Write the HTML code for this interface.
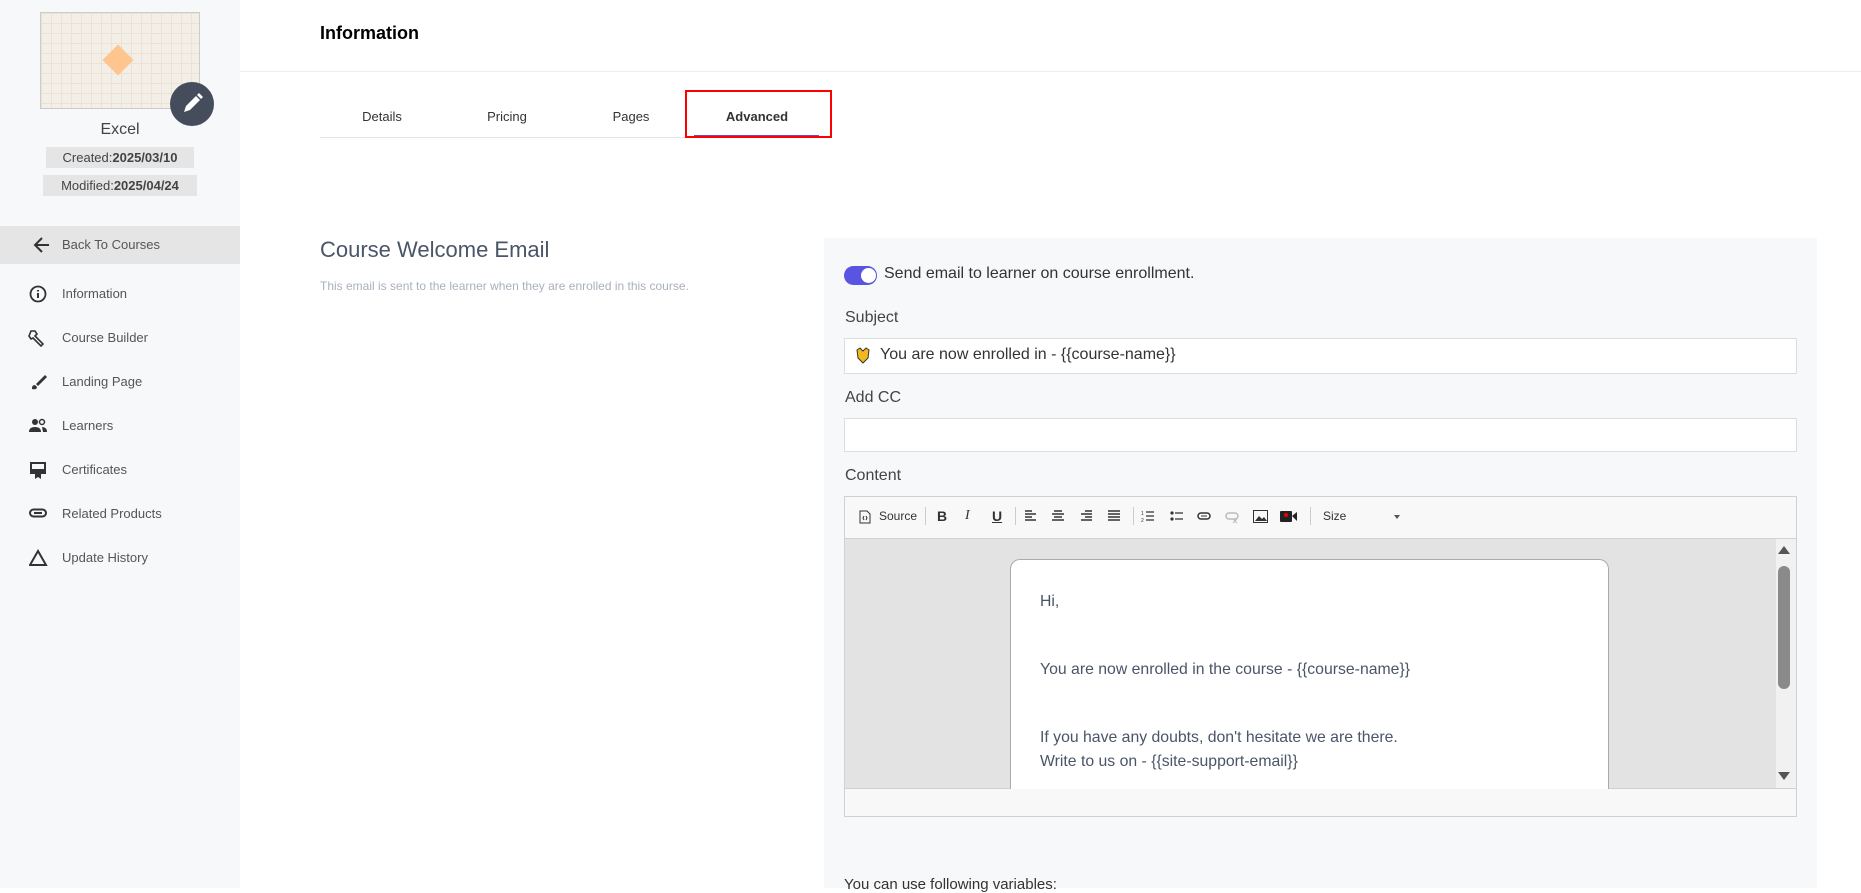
<!DOCTYPE html>
<html><head><meta charset="utf-8"><style>
*{box-sizing:border-box;margin:0;padding:0}
body{width:1861px;height:888px;overflow:hidden;background:#fff;font-family:"Liberation Sans",sans-serif;position:relative;color:#333}
.abs{position:absolute}
#side{left:0;top:0;width:240px;height:888px;background:#f7f8fa}
.thumb{left:40px;top:12px;width:160px;height:97px;border:1px solid #ccc;background-color:#f3efe7;background-image:linear-gradient(#e9e2d6 1px,transparent 1px),linear-gradient(90deg,#e9e2d6 1px,transparent 1px);background-size:10px 10px}
.dia{left:107px;top:49px;width:22px;height:22px;background:#ffc58f;transform:rotate(45deg)}
.pen{left:170px;top:82px;width:44px;height:44px;border-radius:50%;background:#454d5d}
.menu{left:62px;font-size:13px;color:#555;line-height:16px}
.tab{top:109px;font-size:13px;color:#333;text-align:center;width:120px}
.lbl{left:845px;font-size:16px;color:#444}
.inp{left:844px;width:953px;background:#fff;border:1px solid #ddd}
.tb{top:509px;font-size:12px;color:#333}
.mail{left:1040px;font-size:15.8px;color:#4a5568}
.ti{position:absolute;top:510px}
</style></head><body>
<div id="side" class="abs"></div>
<div class="abs thumb"></div>
<div class="abs dia"></div>
<div class="abs pen"><svg width="44" height="44" viewBox="0 0 44 44"><path d="M14 30 l2-6 10-10 4 4-10 10z M27 13 l2-2 4 4-2 2z" fill="#fff"/></svg></div>
<div class="abs" style="left:0;width:240px;top:121px;text-align:center;font-size:16px;color:#444">Excel</div>
<div class="abs" style="left:46px;top:147px;width:148px;height:21px;background:#e5e5e5;font-size:13px;text-align:center;line-height:21px;color:#444">Created:<b>2025/03/10</b></div>
<div class="abs" style="left:43px;top:175px;width:154px;height:21px;background:#e5e5e5;font-size:13px;text-align:center;line-height:21px;color:#444">Modified:<b>2025/04/24</b></div>
<div class="abs" style="left:0;top:226px;width:240px;height:38px;background:#e5e5e5"></div>
<svg class="abs" style="left:32px;top:235px" width="20" height="20" viewBox="0 0 20 20"><path d="M17 10H4M10 3 3 10l7 7" stroke="#333" stroke-width="2" fill="none"/></svg>
<div class="abs menu" style="top:237px">Back To Courses</div>
<svg class="abs" style="left:29px;top:285px" width="20" height="20"><circle cx="9" cy="9" r="7.5" stroke="#333" stroke-width="1.8" fill="none"/><path d="M9 8v5M9 5v1.5" stroke="#333" stroke-width="2"/></svg>
<div class="abs menu" style="top:286px">Information</div>
<svg class="abs" style="left:28px;top:328px" width="20" height="20"><path d="M3 3l4 0 2 3-2 2 8 8-2 2-8-8-2 1-2-3z" stroke="#333" stroke-width="1.6" fill="none"/></svg>
<div class="abs menu" style="top:330px">Course Builder</div>
<svg class="abs" style="left:29px;top:373px" width="20" height="20"><path d="M16 2 7 11l2 2 9-9z M3 15q0-3 3-3l2 2q0 3-5 2z" fill="#333"/></svg>
<div class="abs menu" style="top:374px">Landing Page</div>
<svg class="abs" style="left:29px;top:417px" width="20" height="20"><circle cx="6" cy="5" r="3" fill="#333"/><circle cx="13" cy="5" r="2.5" fill="none" stroke="#333" stroke-width="1.5"/><path d="M0 15q0-5 6-5t6 5zM13 10q5 0 5 5h-4" fill="#333"/></svg>
<div class="abs menu" style="top:418px">Learners</div>
<svg class="abs" style="left:29px;top:461px" width="20" height="20"><rect x="1" y="1" width="16" height="12" fill="#333"/><rect x="3" y="3" width="12" height="5" fill="#f7f8fa"/><path d="M6 13v5l3-2 3 2v-5" fill="#333"/></svg>
<div class="abs menu" style="top:462px">Certificates</div>
<svg class="abs" style="left:29px;top:508px" width="20" height="12"><rect x="1" y="1.5" width="16" height="7" rx="3.5" fill="none" stroke="#333" stroke-width="2"/><path d="M5 5h8" stroke="#333" stroke-width="2"/></svg>
<div class="abs menu" style="top:506px">Related Products</div>
<svg class="abs" style="left:29px;top:549px" width="20" height="18"><path d="M9 2 1 16h16z" fill="none" stroke="#333" stroke-width="2"/></svg>
<div class="abs menu" style="top:550px">Update History</div>

<div class="abs" style="left:320px;top:23px;font-size:18px;font-weight:bold;color:#000">Information</div>
<div class="abs" style="left:240px;top:71px;width:1621px;height:1px;background:#eee"></div>
<div class="abs tab" style="left:322px">Details</div>
<div class="abs tab" style="left:447px">Pricing</div>
<div class="abs tab" style="left:571px">Pages</div>
<div class="abs tab" style="left:697px;font-weight:bold">Advanced</div>
<div class="abs" style="left:320px;top:137px;width:512px;height:1px;background:#e5e5e5"></div>
<div class="abs" style="left:694px;top:135px;width:125px;height:2px;background:#5a4fd6"></div>
<div class="abs" style="left:685px;top:90px;width:147px;height:48px;border:2px solid #f00"></div>

<div class="abs" style="left:320px;top:237px;font-size:22px;color:#4a5568">Course Welcome Email</div>
<div class="abs" style="left:320px;top:279px;font-size:12px;color:#a9b0bd">This email is sent to the learner when they are enrolled in this course.</div>

<div class="abs" style="left:824px;top:238px;width:993px;height:650px;background:#f7f8fa"></div>
<div class="abs" style="left:844px;top:266px;width:33px;height:19px;border-radius:10px;background:#5a55e0"></div>
<div class="abs" style="left:861px;top:268px;width:15px;height:15px;border-radius:8px;background:#fff"></div>
<div class="abs" style="left:884px;top:265px;font-size:16px;color:#333">Send email to learner on course enrollment.</div>
<div class="abs lbl" style="top:309px;font-size:16px">Subject</div>
<div class="abs inp" style="top:338px;height:36px"></div>
<svg class="abs" style="left:855px;top:347px" width="16" height="18"><path d="M2 3l3-2 3 3 3-3 3 2-1 8-5 5-5-5z" fill="#f3b81c" stroke="#333" stroke-width="1"/></svg>
<div class="abs" style="left:880px;top:346px;font-size:16px;color:#333">You are now enrolled in - {{course-name}}</div>
<div class="abs lbl" style="top:389px">Add CC</div>
<div class="abs inp" style="top:418px;height:34px"></div>
<div class="abs lbl" style="top:467px">Content</div>

<div class="abs" style="left:844px;top:496px;width:953px;height:321px;border:1px solid #d1d1d1;background:#f8f8f8"></div>
<div class="abs" style="left:845px;top:538px;width:951px;height:1px;background:#d1d1d1"></div>
<div class="abs" style="left:845px;top:539px;width:931px;height:249px;background:#e3e3e3"></div>
<div class="abs" style="left:1776px;top:539px;width:20px;height:249px;background:#f1f1f1"></div>
<div class="abs" style="left:1778px;top:566px;width:12px;height:123px;border-radius:6px;background:#8a8a8a"></div>
<div class="abs" style="left:1778px;top:546px;width:0;height:0;border:6px solid transparent;border-bottom:8px solid #555;border-top:0"></div>
<div class="abs" style="left:1778px;top:772px;width:0;height:0;border:6px solid transparent;border-top:8px solid #555;border-bottom:0"></div>
<div class="abs" style="left:845px;top:788px;width:951px;height:1px;background:#d1d1d1"></div>
<div class="abs" style="left:1010px;top:559px;width:599px;height:230px;background:#fff;border:1px solid #aaa;border-bottom:0;border-radius:10px 10px 0 0"></div>
<div class="abs mail" style="top:593px">Hi,</div>
<div class="abs mail" style="top:661px">You are now enrolled in the course - {{course-name}}</div>
<div class="abs mail" style="top:729px">If you have any doubts, don't hesitate we are there.</div>
<div class="abs mail" style="top:753px">Write to us on - {{site-support-email}}</div>

<svg class="ti" style="left:859px" width="12" height="14"><path d="M1 1h7l3 3v9H1z" fill="none" stroke="#333"/><path d="M5 6 4 8l1 2M7 6l1 2-1 2" stroke="#333" fill="none"/></svg>
<div class="abs tb" style="left:879px">Source</div>
<div class="abs" style="left:925px;top:507px;width:1px;height:18px;background:#ccc"></div>
<div class="abs tb" style="left:937px;font-weight:bold;font-size:14px;top:508px">B</div>
<div class="abs tb" style="left:965px;font-style:italic;font-size:14px;top:508px;font-family:'Liberation Serif',serif">I</div>
<div class="abs tb" style="left:992px;font-weight:bold;font-size:14px;top:508px;text-decoration:underline">U</div>
<div class="abs" style="left:1015px;top:507px;width:1px;height:18px;background:#ccc"></div>
<svg class="ti" style="left:1025px" width="12" height="12"><path d="M0 1h7M0 4h11M0 7h7M0 10h11" stroke="#333" stroke-width="1.5"/></svg>
<svg class="ti" style="left:1052px" width="12" height="12"><path d="M2 1h8M0 4h12M2 7h8M0 10h12" stroke="#333" stroke-width="1.5"/></svg>
<svg class="ti" style="left:1080px" width="12" height="12"><path d="M5 1h7M1 4h11M5 7h7M1 10h11" stroke="#333" stroke-width="1.5"/></svg>
<svg class="ti" style="left:1108px" width="12" height="12"><path d="M0 1h12M0 4h12M0 7h12M0 10h12" stroke="#333" stroke-width="1.5"/></svg>
<div class="abs" style="left:1133px;top:507px;width:1px;height:18px;background:#ccc"></div>
<svg class="ti" style="left:1141px" width="13" height="13"><path d="M5 2h8M5 6h8M5 10h8" stroke="#333" stroke-width="1.3"/><text x="0" y="5" font-size="5" fill="#333">1</text><text x="0" y="12" font-size="5" fill="#333">2</text></svg>
<svg class="ti" style="left:1170px" width="13" height="13"><circle cx="2" cy="3" r="1.6" fill="#333"/><circle cx="2" cy="9" r="1.6" fill="#333"/><path d="M5 3h8M5 9h8" stroke="#333" stroke-width="1.3"/></svg>
<svg class="ti" style="left:1197px" width="14" height="12"><rect x="1" y="3" width="12" height="6" rx="3" fill="none" stroke="#333" stroke-width="1.5"/><path d="M4 6h6" stroke="#333"/></svg>
<svg class="ti" style="left:1225px" width="14" height="14"><rect x="1" y="3" width="12" height="6" rx="3" fill="none" stroke="#bbb" stroke-width="1.5"/><path d="M8 9l4 4M12 9l-4 4" stroke="#bbb"/></svg>
<svg class="ti" style="left:1253px" width="15" height="13"><rect x="0.5" y="0.5" width="14" height="12" fill="none" stroke="#333"/><path d="M2 11l4-5 3 3 2-2 3 4z" fill="#333"/></svg>
<svg class="ti" style="left:1280px" width="17" height="13"><rect x="0" y="1" width="12" height="11" rx="1" fill="#222"/><path d="M12 6l5-4v9z" fill="#222"/><circle cx="6" cy="5" r="2" fill="#e00"/></svg>
<div class="abs" style="left:1310px;top:507px;width:1px;height:18px;background:#ccc"></div>
<div class="abs tb" style="left:1323px">Size</div>
<div class="abs" style="left:1394px;top:515px;border:3px solid transparent;border-top:4px solid #555"></div>

<div class="abs" style="left:844px;top:876px;font-size:15px;color:#333">You can use following variables:</div>
</body></html>
